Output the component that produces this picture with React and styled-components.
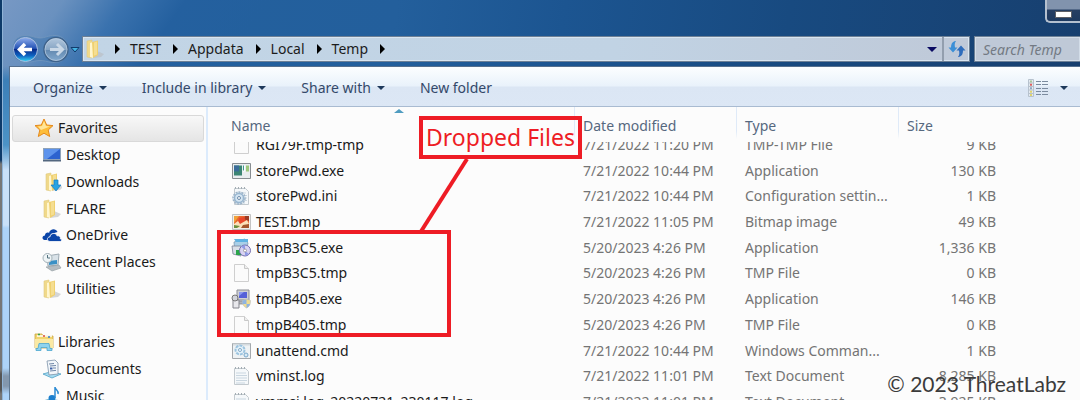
import React from "react";
import styled, { createGlobalStyle } from "styled-components";

const Global = createGlobalStyle`
  * { box-sizing: border-box; }
  body { margin: 0; overflow: hidden; }
  body, button, input { font-family: "Noto Sans", "Open Sans", sans-serif; }
  button { border: 0; padding: 0; background: none; color: inherit; font-size: inherit; line-height: inherit; white-space: nowrap; }
`;

const Desktop = styled.div`
  height: 100vh;
  padding-left: 2px;
  font-size: 14px;
  line-height: 20px;
  background: linear-gradient(#0d3a69 0 160px, #777 164px 370px, #555 374px 390px, #777 394px);
`;

const Window = styled.div`
  height: 100%;
  display: flex;
  flex-direction: column;
  overflow: hidden;
  padding-left: 6px;
  border-left: 1px solid #8fb3d6;
  background:
    linear-gradient(#6f96c000 66px, #3c7fb8 80px, #4c93c7 145px, #c9e0f8 170px 225px, #add3f8 228px 368px, #8397ad 376px 386px, #add3f8 394px) 0 0 / 6px 100% no-repeat,
    linear-gradient(125deg, #7798c4 0, #6a91bf 50px, #3a72ae 100px, #24609f 150px, transparent 220px),
    linear-gradient(97deg, #23619f 0%, #235f9c 35%, #1c5591 50%, #184a80 70%, #173e6d 100%);
`;

const TitleBar = styled.header`
  height: 36px;
  flex: none;
  display: flex;
  justify-content: flex-end;
  align-items: flex-start;
`;

const MinimizeButton = styled.button`
  width: 35px;
  height: 23px;
  display: flex;
  justify-content: center;
  padding-top: 11px;
  border: 1px solid #b4c0cf;
  border-width: 0 0 2px 2px;
  border-bottom-left-radius: 5px;
  background: linear-gradient(#8193ad 0 9px, #263f63 10px, #1c395f 22px);
  &::before {
    content: "";
    width: 15px;
    height: 5px;
    border: 1px solid #5d5f66;
    background: #fff;
  }
`;

const NavBar = styled.nav`
  height: 30px;
  flex: none;
  display: flex;
  align-items: flex-start;
`;

const HistoryButtons = styled.div`
  width: 73px;
  flex: none;
  display: flex;
  svg { display: block; margin-top: -2px; }
`;

const AddressBar = styled.div`
  flex: 1;
  height: 26px;
  display: flex;
  align-items: center;
  border: 1px solid #6d8095;
  box-shadow: inset 0 0 0 1px #d9e5f0;
  background: linear-gradient(90deg, #c2d5e6, #c1d3e4 60%, #bfc9d8);
  color: #1c1c1c;
  padding-left: 2px;
`;

const Crumb = styled.button`
  height: 24px;
  padding: 0 10px 0 0;
  display: flex;
  align-items: center;
  gap: 12px;
`;

const CaretRight = styled.span`
  border-left: 5px solid #000;
  border-top: 5px solid transparent;
  border-bottom: 5px solid transparent;
`;

const CaretDown = styled.span`
  flex: none;
  border-top: ${(p) => p.$size || 4}px solid ${(p) => p.$color || "#1e395b"};
  border-left: ${(p) => p.$size || 4}px solid transparent;
  border-right: ${(p) => p.$size || 4}px solid transparent;
`;

const RootCrumb = styled(Crumb)`
  gap: 10px;
`;

const AddressTools = styled.div`
  margin-left: auto;
  height: 24px;
  display: flex;
  align-items: center;
`;

const AddressTool = styled.button`
  width: ${(p) => p.$width}px;
  height: 24px;
  display: flex;
  align-items: center;
  justify-content: center;
  border-left: ${(p) => (p.$ruled ? "2px solid #929eae" : "0")};
`;

const SearchBox = styled.input`
  width: 106px;
  height: 26px;
  flex: none;
  margin-left: 4px;
  padding: 0 8px;
  border: 1px solid #6d8095;
  border-right: 0;
  border-radius: 0;
  box-shadow: inset 0 0 0 1px #d3dde8;
  background: #bfc9d7;
  font-size: 14px;
  font-style: italic;
  &::placeholder { color: #737a83; opacity: 1; }
`;

const Toolbar = styled.div`
  height: 41px;
  flex: none;
  display: flex;
  align-items: center;
  gap: 35px;
  padding: 2px 12px 0 23px;
  border: solid #55708f;
  border-width: 1px 0 0 1px;
  box-shadow: inset 0 -1px #a9bbd1;
  background: linear-gradient(#fcfeff 0, #e9f2fb 19px, #dbe6f4 20px, #dce7f5 100%);
  color: #34496a;
`;

const ToolButton = styled.button`
  display: flex;
  align-items: center;
  gap: 6px;
`;

const ViewButton = styled(ToolButton)`
  margin-left: auto;
  gap: 11px;
`;

const Content = styled.div`
  flex: 1;
  min-height: 0;
  display: flex;
  border-left: 1px solid #5f7891;
  background: #fcfcfc;
`;

const Sidebar = styled.aside`
  width: 198px;
  flex: none;
  padding: 8px 2px 0;
  overflow: hidden;
  border-right: 2px solid #dcebfc;
`;

const Tree = styled.div`
  height: 294px;
  display: grid;
  grid-auto-rows: 1fr;
`;

const TreeLink = styled.a`
  display: flex;
  align-items: center;
  gap: 4px;
  padding-left: ${(p) => (p.$root ? 21 : 29)}px;
  color: #1a1a1a;
  text-decoration: none;
  border: 1px solid ${(p) => (p.$active ? "#d9d9d9" : "transparent")};
  border-radius: 3px;
  background: ${(p) => (p.$active ? "linear-gradient(#f8f8f8, #e5e5e5)" : "none")};
`;

const Icon = styled.svg`
  width: 20px;
  height: 20px;
  flex: none;
  display: block;
`;

const Files = styled.main`
  position: relative;
  flex: 1;
  min-width: 0;
  overflow: hidden;
`;

const FileTable = styled.table`
  width: 100%;
  height: 308px;
  table-layout: fixed;
  border-collapse: collapse;
`;

const Col = styled.col`
  width: ${(p) => (p.$width ? p.$width + "px" : "auto")};
`;

const HeadCell = styled.th`
  height: 25px;
  padding: 0;
  font-weight: 400;
  text-align: left;
  vertical-align: top;
`;

const HeadLabel = styled.div`
  position: relative;
  z-index: 1;
  height: 35px;
  margin-bottom: -10px;
  padding: 9px 0 0 ${(p) => (p.$first ? 23 : 8)}px;
  color: #56687f;
  background:
    linear-gradient(#dfeaf8 24px, #fcfcfc) 100% 0 / ${(p) => (p.$last ? 0 : 1)}px 32px no-repeat,
    #fcfcfc;
`;

const Cell = styled.td`
  height: 25px;
  padding: 0 ${(p) => (p.$right ? 9 : 0)}px 0 8px;
  color: #747474;
  text-align: ${(p) => (p.$right ? "right" : "left")};
  white-space: nowrap;
`;

const FileName = styled.div`
  display: flex;
  align-items: center;
  gap: 5px;
  padding-left: 15px;
  color: #1a1a1a;
`;

const SortMark = styled.span`
  position: absolute;
  z-index: 2;
  left: 186px;
  top: 2px;
  border-bottom: 4px solid #4f9cc0;
  border-left: 5px solid transparent;
  border-right: 5px solid transparent;
`;

const Callout = styled.div`
  position: absolute;
  z-index: 3;
  left: 211px;
  top: 9px;
  width: 163px;
  height: 43px;
  display: flex;
  justify-content: center;
  border: 4px solid #ee1c25;
  color: #ee1c25;
  font-size: 23px;
  line-height: 35px;
  white-space: nowrap;
`;

const Highlight = styled.div`
  position: absolute;
  z-index: 3;
  left: 9px;
  top: 123px;
  width: 234px;
  height: 107px;
  border: 4px solid #ee1c25;
`;

const Pointer = styled.svg`
  position: absolute;
  z-index: 3;
  left: 206px;
  top: 50px;
`;

const Watermark = styled.div`
  position: absolute;
  z-index: 4;
  right: 14px;
  top: 263px;
  color: #3b3b3b;
  font-family: Lato, sans-serif;
  font-size: 21px;
  line-height: 28px;
  white-space: nowrap;
`;

const Folder = () => (
  <>
    <path d="M12 12l7 3-3 3-8 1z" fill="#b9bcc0" opacity=".6" />
    <path d="M2 2l5-1v18l-5-1z" fill="#f0d98a" stroke="#dfc980" strokeWidth=".6" />
    <path d="M5 4l3-1v16l-3-1z" fill="#fff6cf" />
    <path d="M7 3l6-1.500v14.500L8 19z" fill="#efd070" />
    <path d="M9 3.500l3-1v13l-3 1z" fill="#f5de92" />
  </>
);

const Page = () => (
  <>
    <path d="M3.500 1.500h10l4 4v13h-14z" fill="#fbfbfb" stroke="#cfcfcf" />
    <path d="M13.500 1.500v4h4" fill="#eee" stroke="#c8c8c8" />
  </>
);

const Note = () => (
  <>
    <path d="M3.500 2.500h11l3 3v13h-14z" fill="#f5f8fa" stroke="#c3cacf" />
    <path d="M4 2h10" stroke="#a3adb3" strokeWidth="2" strokeDasharray="1 2" />
    <path d="M5 7h10M5 9.500h11M5 12h11M5 14.500h11M5 17h9" stroke="#c9d6e0" />
  </>
);

const Gear = ({ x = 0, y = 0 }) => (
  <g transform={`translate(${x} ${y})`} fill="none">
    <circle cx="8" cy="12" r="6" stroke="#9db4c9" strokeWidth="1.500" strokeDasharray="2 1" />
    <circle cx="8" cy="12" r="4.500" fill="#d5e6f3" stroke="#98b6d0" strokeWidth="1.500" />
    <circle cx="8" cy="12" r="1.500" fill="#fff" stroke="#6e8cab" />
  </g>
);

const drawings = {
  folder: <Folder />,
  star: (
    <>
      <path d="M10 1l2.700 6 6.300.6-4.800 4.400 1.500 6.500L10 15.200 4.300 18.500l1.500-6.500L1 7.600 7.300 7z" fill="#fdbd3a" stroke="#e58a1f" />
      <path d="M10 3l2 5 4 .5L7 12l-3-3.500L8 8z" fill="#ffe69a" />
    </>
  ),
  desktop: (
    <>
      <path d="M1 3h18v13H1z" fill="#8ea2b8" />
      <path d="M2 4h16v10H2z" fill="#2c62cf" />
      <path d="M2 4h16L5 14H2z" fill="#5d93ec" />
      <path d="M1 15h18v1.500H1z" fill="#53677f" />
    </>
  ),
  downloads: (
    <>
      <g transform="translate(2 0)"><Folder /></g>
      <path d="M12 8h4v5h3l-5 6-5-6h3z" fill="#29a3e2" stroke="#1478bd" strokeWidth=".7" />
    </>
  ),
  onedrive: (
    <>
      <path d="M2.500 15c-3-.5-2.500-4.500.5-4.500 0-3 3-3.500 4-2.500C8 3.500 14 3 15.500 7L9 9 6 15z" fill="#0b45a8" />
      <path d="M8 16.500c-3.500 0-3.500-4.500 0-4.700.3-4 6-4.500 7-1 3-.5 4 2 3 2.800 2 .4 2 2.900 0 2.900z" fill="#0b45a8" stroke="#fcfcfc" strokeWidth=".8" />
    </>
  ),
  recent: (
    <>
      <path d="M5 4l12-2-1 11-10 1z" fill="#d9e2e8" stroke="#9eabb4" />
      <path d="M7 9l8-1v4l-8 1z" fill="#3a90c5" />
      <path d="M4 15l13-2 2 3-9 3z" fill="#b5bcc1" stroke="#8f989e" strokeWidth=".6" />
      <circle cx="5.500" cy="6" r="4.500" fill="#eef4f6" stroke="#a3b1b8" />
      <path d="M5.500 3v3h2.500" stroke="#53717e" fill="none" />
    </>
  ),
  libraries: (
    <>
      <path d="M1 2h7l1 2h10v12H1z" fill="#f2d56e" stroke="#c9a541" strokeWidth=".8" />
      <path d="M3 4h15" stroke="#fff" strokeWidth="1.500" />
      <path d="M4 2.500h2" stroke="#3aa64b" strokeWidth="1.500" /><path d="M9 4h2" stroke="#db4b3c" strokeWidth="1.500" /><path d="M14 5h2" stroke="#3379cc" strokeWidth="1.500" />
      <path d="M1 7h18v9H1z" fill="#fae9a4" />
      <path d="M5 11.500h10l1 5h2v2h-5v-3H7v3H2v-2h2z" fill="#8fd3ee" stroke="#4ba6cf" strokeWidth=".8" />
    </>
  ),
  documents: (
    <>
      <path d="M1 15l7-2 11 2-9 4z" fill="#a7dcf1" stroke="#4f9fc4" strokeWidth=".8" />
      <path d="M5 2l8-1 3 3v11l-9 1z" fill="#f2f6fa" stroke="#7d93aa" strokeWidth=".8" />
      <path d="M7 5l5-.5M8 7l6-.5M11 9h3M8 12l6-.6" stroke="#6f87a8" />
      <path d="M8 8.500h2.500v2H8z" fill="#3e62a8" />
    </>
  ),
  music: (
    <>
      <path d="M1 15l7-2 11 2-9 4z" fill="#a7dcf1" stroke="#4f9fc4" strokeWidth=".8" />
      <ellipse cx="10" cy="12" rx="3.500" ry="3" fill="#1c7fce" />
      <path d="M13 12V1c0 3 4 3 3 7" stroke="#2b8ad3" strokeWidth="1.500" fill="none" />
    </>
  ),
  page: <Page />,
  note: <Note />,
  app: (
    <>
      <path d="M1.500 2.500h18v15h-18z" fill="#e9edef" stroke="#878d91" />
      <path d="M3 4.500h8v10H3z" fill="#3b8574" /><path d="M3 4.500h5v6H3z" fill="#3a6c99" />
      <path d="M12 4.500h2v6h-2z" fill="#fff" /><path d="M15 4.500h3v6h-3z" fill="#9dc87d" />
      <path d="M12 4.500h1v5h-1z" fill="#3a9b8d" />
    </>
  ),
  ini: (<><Note /><Gear /></>),
  bmp: (
    <>
      <path d="M1.500 2.500h18v15h-18z" fill="#f1efed" stroke="#c3c3c3" />
      <path d="M3 4h15v12H3z" fill="#e9682f" />
      <path d="M3 4h5l-5 7z" fill="#f0a23b" />
      <path d="M14 4h4v5l-5-1z" fill="#9c3b24" />
      <path d="M8 6l5-1 2 4-5 4-3-2z" fill="#e8472b" />
      <path d="M3 12l4-3 2 3 7-4 2 4-6 4H3z" fill="#fbe0b8" />
      <path d="M3 13l6 1-3 2H3z" fill="#6b8f3d" /><path d="M12 13l6-1v4h-8z" fill="#a4552b" />
    </>
  ),
  installer: (
    <>
      <path d="M3 4l11-3 3 4-2 9-11 2z" fill="#a9cfe8" stroke="#7b98b3" strokeWidth=".8" />
      <path d="M3 1h14v3H5z" fill="#5fb2e2" />
      <path d="M1 8h9v10l-8-2z" fill="#d9dfe8" stroke="#7a8195" strokeWidth=".8" />
      <path d="M5 12h5v5H5z" fill="#2aa54a" />
      <circle cx="14" cy="12.500" r="5.500" fill="#d8d3f2" stroke="#746fae" />
      <path d="M14 12L10 8.500 14 7zM14 13l4 3-4 2z" fill="#8f9be6" />
      <circle cx="14" cy="12.500" r="1.500" fill="#fff" stroke="#777" strokeWidth=".6" />
    </>
  ),
  setup: (
    <>
      <path d="M6 1h12v10H6z" fill="#cfd0d4" stroke="#8b8d94" />
      <path d="M8 3h8v6H8z" fill="#5560d8" /><path d="M8 3h5l-5 4z" fill="#8a98f0" />
      <path d="M5 12h13v3H5z" fill="#b2b5bb" stroke="#7c7f86" strokeWidth=".7" />
      <path d="M2 11h6v8H2z" fill="#e8e8ec" stroke="#84858d" /><circle cx="4" cy="9" r="3" fill="#d2d4da" stroke="#777" />
      <path d="M15.500 10l4 1.500c0 4-1 6-4 7.500-3-1.500-4-3.500-4-7.500z" fill="#f0dc8e" stroke="#b8bdc2" strokeWidth=".6" />
      <path d="M15.500 10.500v4.500h-4l-.1-3.500zM15.500 15h3.500c-.5 2-1.500 3-3.500 4z" fill="#8fb4e0" />
    </>
  ),
  cmd: (
    <>
      <path d="M1.500 2.500h18v15h-18z" fill="#eef2f4" stroke="#a4a9ad" />
      <path d="M2 3.500h17" stroke="#d5dbdf" strokeWidth="2" />
      <circle cx="9" cy="9" r="4.500" fill="#e4f1f9" stroke="#9cc4df" strokeWidth="2" strokeDasharray="3 1" />
      <circle cx="9" cy="9" r="1.500" fill="#fff" stroke="#7fa9c8" />
      <circle cx="15" cy="14" r="2" fill="#d8eaf5" stroke="#79a8cb" />
    </>
  ),
};

const Glyph = ({ name }) => (
  <Icon viewBox="0 0 20 20" aria-hidden="true">{drawings[name]}</Icon>
);

const tree = [
  ["Favorites", "star", true],
  ["Desktop", "desktop"],
  ["Downloads", "downloads"],
  ["FLARE", "folder"],
  ["OneDrive", "onedrive"],
  ["Recent Places", "recent"],
  ["Utilities", "folder"],
  null,
  ["Libraries", "libraries", true],
  ["Documents", "documents"],
  ["Music", "music"],
];

const files = [
  ["page", "RGI79F.tmp-tmp", "7/21/2022 11:20 PM", "TMP-TMP File", "9 KB"],
  ["app", "storePwd.exe", "7/21/2022 10:44 PM", "Application", "130 KB"],
  ["ini", "storePwd.ini", "7/21/2022 10:44 PM", "Configuration settin...", "1 KB"],
  ["bmp", "TEST.bmp", "7/21/2022 11:05 PM", "Bitmap image", "49 KB"],
  ["installer", "tmpB3C5.exe", "5/20/2023 4:26 PM", "Application", "1,336 KB"],
  ["page", "tmpB3C5.tmp", "5/20/2023 4:26 PM", "TMP File", "0 KB"],
  ["setup", "tmpB405.exe", "5/20/2023 4:26 PM", "Application", "146 KB"],
  ["page", "tmpB405.tmp", "5/20/2023 4:26 PM", "TMP File", "0 KB"],
  ["cmd", "unattend.cmd", "7/21/2022 10:44 PM", "Windows Comman...", "1 KB"],
  ["note", "vminst.log", "7/21/2022 11:01 PM", "Text Document", "8,285 KB"],
  ["note", "vmmsi.log_20220721_230117.log", "7/21/2022 11:01 PM", "Text Document", "3,925 KB"],
];

const History = () => (
  <svg width="73" height="30" viewBox="0 0 73 30" role="img" aria-label="Back and forward">
    <defs>
      <linearGradient id="back" x1="0" y1="0" x2="0" y2="1">
        <stop offset="0" stopColor="#8faeed" /><stop offset=".45" stopColor="#2553b5" />
        <stop offset=".5" stopColor="#0a2c8b" /><stop offset=".75" stopColor="#0e62c0" /><stop offset="1" stopColor="#35d5f5" />
      </linearGradient>
      <linearGradient id="fwd" x1="0" y1="0" x2="0" y2="1">
        <stop offset="0" stopColor="#b3c8de" /><stop offset=".5" stopColor="#86a5c4" />
        <stop offset=".52" stopColor="#6389b0" /><stop offset="1" stopColor="#84abd0" />
      </linearGradient>
    </defs>
    <path d="M16 1.500C23 1.500 26 4 31 4S39 1.500 46 1.500c17 0 17 27 0 27-7 0-9-2-15-2s-8 2-15 2C-1 28.500-1 1.500 16 1.500z" fill="#3f76ae" fillOpacity=".5" stroke="#7397bd" strokeWidth=".8" />
    <circle cx="16.500" cy="15.500" r="12" fill="url(#back)" stroke="#a9bfdf" strokeWidth="1" />
    <path d="M23 15.500H11M16 10l-5.500 5.500L16 21" fill="none" stroke="#fff" strokeWidth="3.500" />
    <circle cx="47" cy="15.500" r="12" fill="url(#fwd)" stroke="#3f638b" strokeWidth="1.500" />
    <circle cx="47" cy="15.500" r="11" fill="none" stroke="#bfd0e2" strokeWidth=".7" />
    <path d="M41 15.500h12M48 10l5.500 5.500L48 21" fill="none" stroke="#c9d8e7" strokeWidth="3" />
    <path d="M62 13.500h8l-4 4.500z" fill="#45b5e5" stroke="#123c6c" />
  </svg>
);

export default function App() {
  return (
    <Desktop>
      <Global />
      <Window>
        <TitleBar>
          <MinimizeButton aria-label="Minimize" />
        </TitleBar>
        <NavBar aria-label="Location">
          <HistoryButtons><History /></HistoryButtons>
          <AddressBar>
            <RootCrumb aria-label="Root"><Glyph name="folder" /><CaretRight /></RootCrumb>
            {["TEST", "Appdata", "Local", "Temp"].map((c) => (
              <Crumb key={c}>{c}<CaretRight /></Crumb>
            ))}
            <AddressTools>
              <AddressTool $width={20} aria-label="Previous locations"><CaretDown $size={5} $color="#0b0b62" /></AddressTool>
              <AddressTool $width={27} $ruled aria-label="Refresh">
                <svg width="18" height="18" viewBox="0 0 18 18">
                  <path d="M7 1C4 2 3 4 3 7.500H.5L5 12.500l4.500-5H7C6.500 5 6.500 3 8 1z" fill="#3b8fd6" />
                  <path d="M11 17c3-1 4-3 4-6.500h2.500L13 5.500l-4.500 5H11c.5 2.500.5 4.500-1 6.500z" fill="#2f6dbc" />
                </svg>
              </AddressTool>
            </AddressTools>
          </AddressBar>
          <SearchBox aria-label="Search Temp" placeholder="Search Temp" />
        </NavBar>
        <Toolbar>
          <ToolButton>Organize <CaretDown /></ToolButton>
          <ToolButton>Include in library <CaretDown /></ToolButton>
          <ToolButton>Share with <CaretDown /></ToolButton>
          <ToolButton>New folder</ToolButton>
          <ViewButton aria-label="Change your view">
            <svg width="22" height="18" viewBox="0 0 22 18">
              <path d="M1.500.5h5v17h-5z" fill="#e4eaf0" stroke="#b7c2ce" />
              <path d="M1 4h6M1 7.500h6M1 11h6M1 14.500h6" stroke="#b7c2ce" />
              <path d="M3 2.500h2" stroke="#a9c59d" strokeWidth="2" /><path d="M3 5.800h2" stroke="#e06060" strokeWidth="2" />
              <path d="M3 9.200h2" stroke="#8fa6c2" strokeWidth="2" /><path d="M3 12.800h2M3 16h2" stroke="#dfd46e" strokeWidth="2" />
              <path d="M9 2.500h5M15 2.500h6M9 5.500h5M15 5.500h6M9 9.500h5M15 9.500h6M9 12.500h5M15 12.500h6M9 15.500h5M15 15.500h6" stroke="#7b8b9f" />
            </svg>
            <CaretDown />
          </ViewButton>
        </Toolbar>
        <Content>
          <Sidebar>
            <Tree>
              {tree.map((t, i) =>
                t ? (
                  <TreeLink key={i} href="#" $root={t[2]} $active={i === 0}><Glyph name={t[1]} />{t[0]}</TreeLink>
                ) : (
                  <span key={i} />
                )
              )}
            </Tree>
          </Sidebar>
          <Files>
            <FileTable>
              <colgroup>
                <Col $width={367} /><Col $width={162} /><Col $width={162} /><Col $width={106} /><Col />
              </colgroup>
              <thead>
                <tr>
                  <HeadCell><HeadLabel $first>Name</HeadLabel></HeadCell>
                  <HeadCell><HeadLabel>Date modified</HeadLabel></HeadCell>
                  <HeadCell><HeadLabel>Type</HeadLabel></HeadCell>
                  <HeadCell><HeadLabel $last>Size</HeadLabel></HeadCell>
                </tr>
              </thead>
              <tbody>
                {files.map(([icon, name, date, type, size]) => (
                  <tr key={name}>
                    <Cell><FileName><Glyph name={icon} />{name}</FileName></Cell>
                    <Cell>{date}</Cell>
                    <Cell>{type}</Cell>
                    <Cell $right>{size}</Cell>
                  </tr>
                ))}
              </tbody>
            </FileTable>
            <SortMark />
            <Pointer width="60" height="80" aria-hidden="true">
              <path d="M53 2L6 76" stroke="#ee1c25" strokeWidth="4" />
            </Pointer>
            <Callout>Dropped Files</Callout>
            <Highlight />
            <Watermark>© 2023 ThreatLabz</Watermark>
          </Files>
        </Content>
      </Window>
    </Desktop>
  );
}
